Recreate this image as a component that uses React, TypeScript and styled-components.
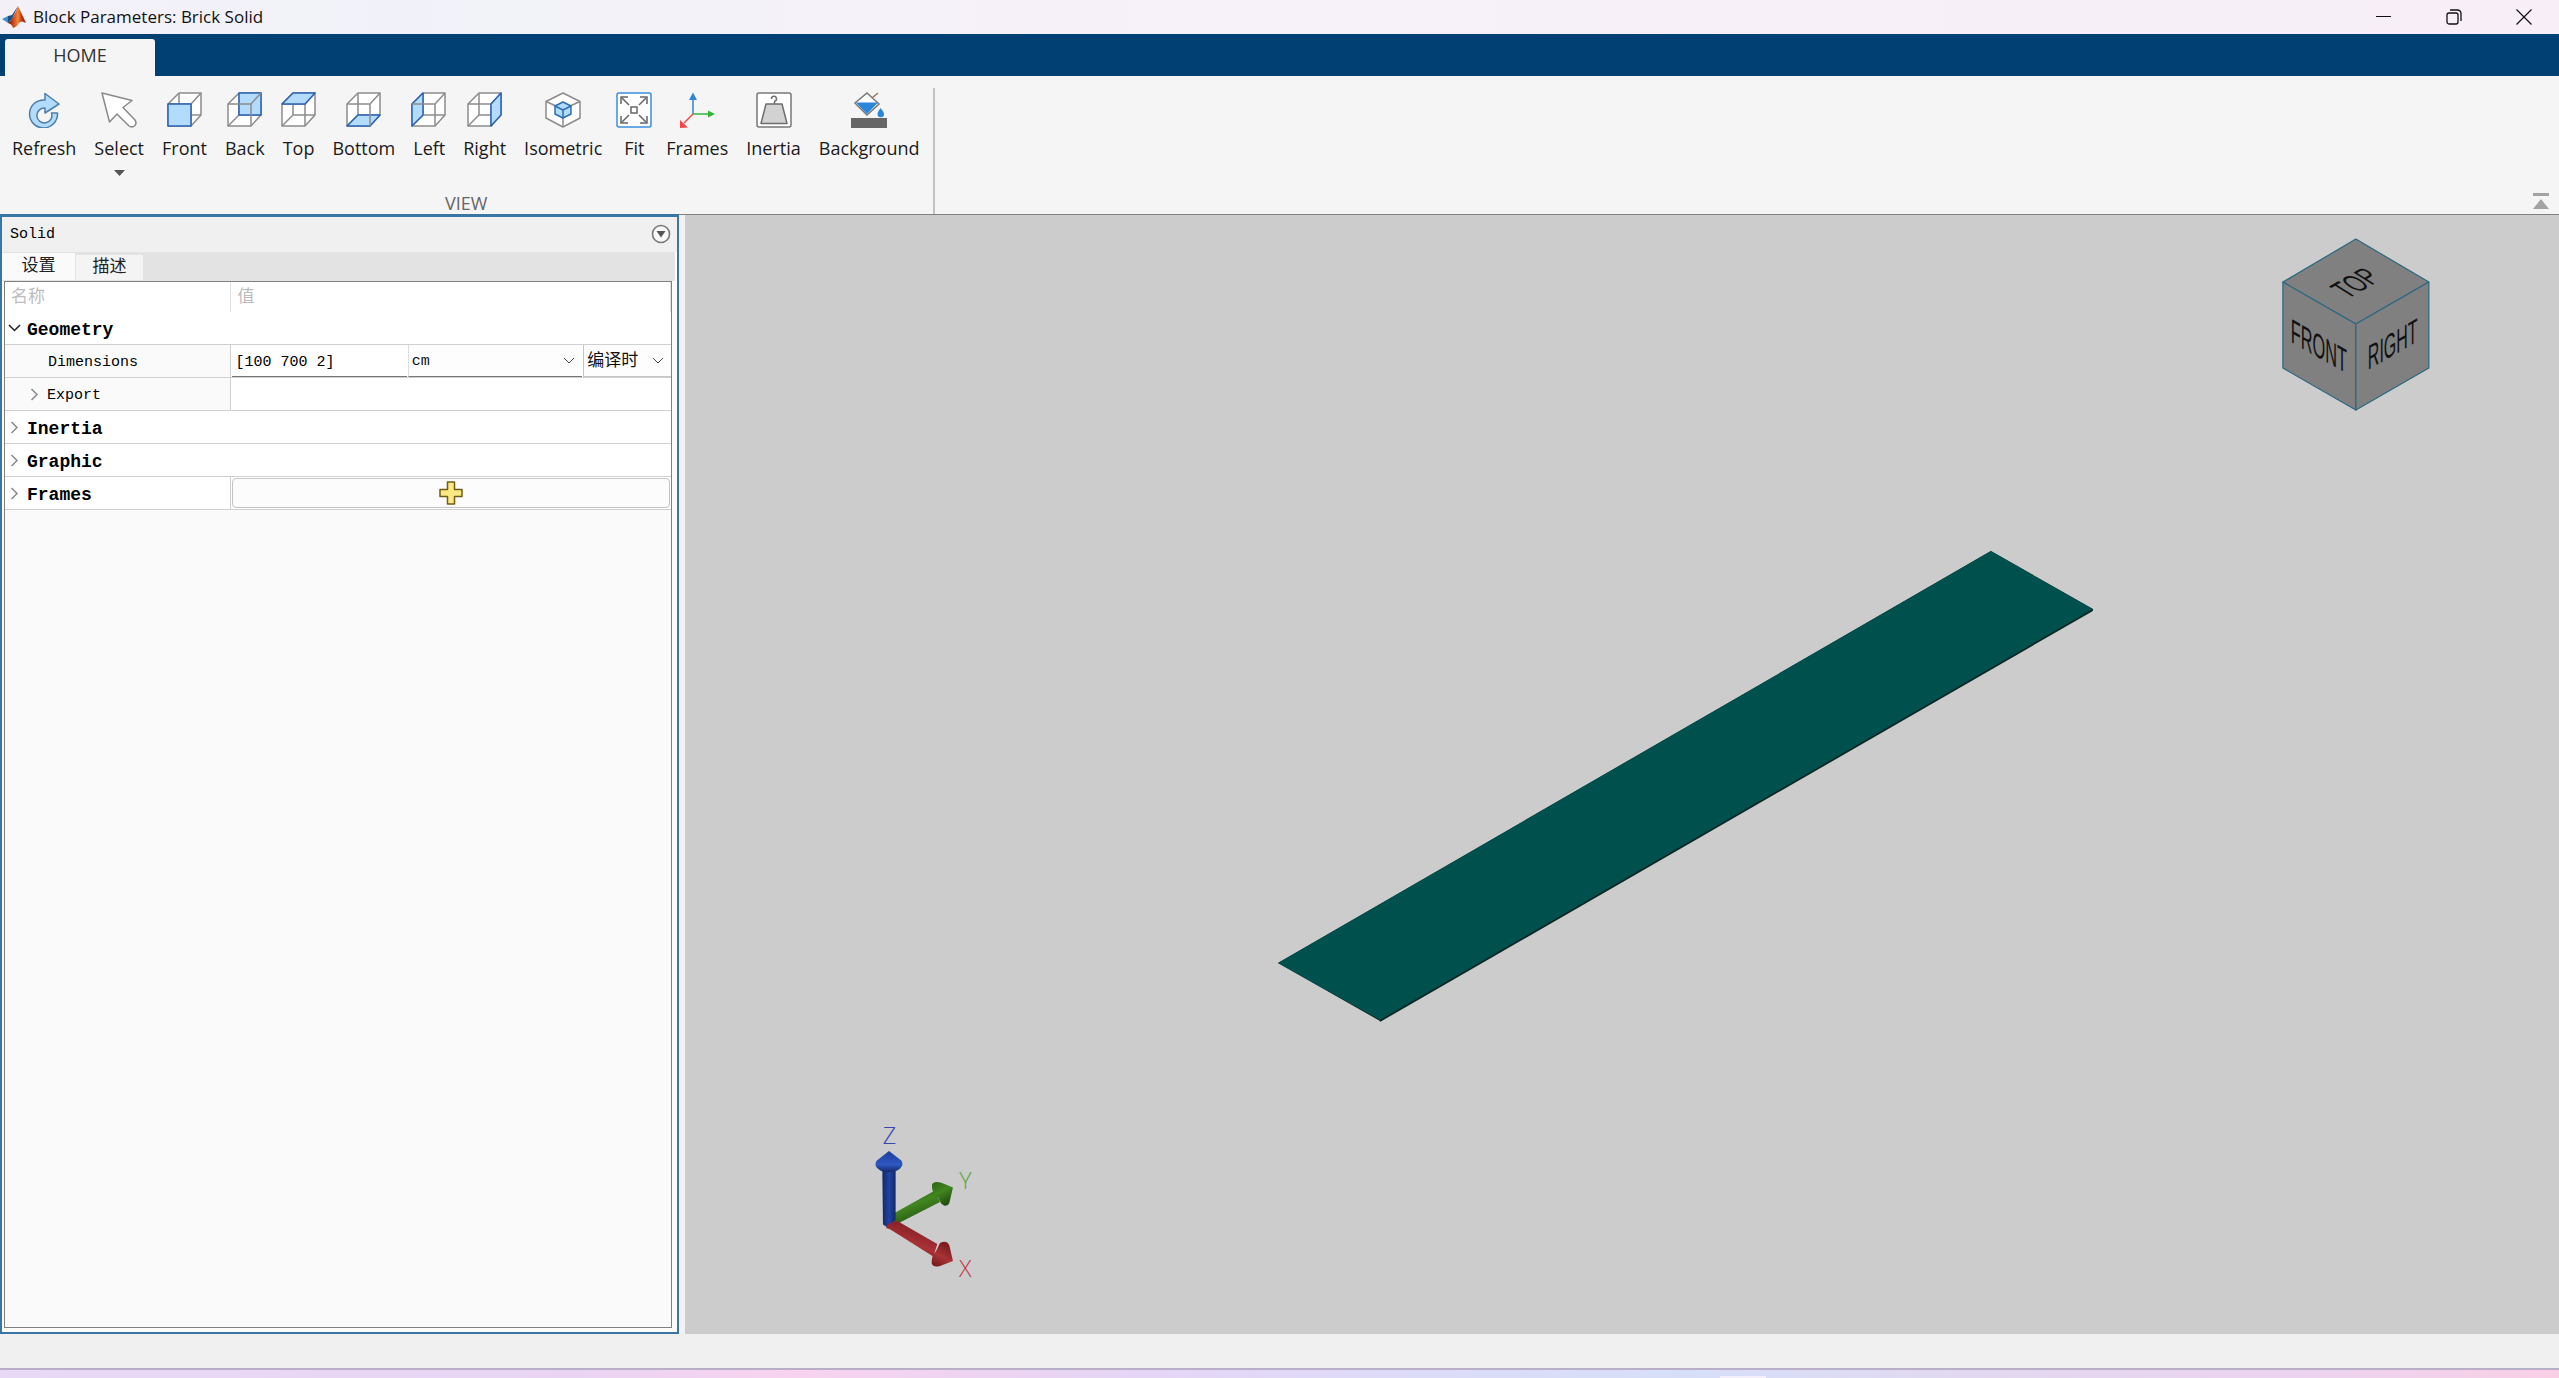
import React, { useState } from "react";
import styled, { createGlobalStyle } from "styled-components";

const UI = `"Open Sans", "Noto Sans", "Noto Sans CJK SC", sans-serif`;
const MONO = `"Liberation Mono", "Noto Sans CJK SC", monospace`;

const GlobalStyle = createGlobalStyle`
  * { box-sizing: border-box; }
  body { margin: 0; background: #f0f0f0; }
  button, input, select { font: inherit; color: inherit; }
`;

const Window = styled.div`
  display: flex;
  flex-direction: column;
  height: 100vh;
  min-height: 640px;
  font-family: ${UI};
  font-size: 18px;
  color: #1a1a1a;
`;

/* ---------- title bar ---------- */

const TitleBar = styled.header`
  display: flex;
  align-items: center;
  height: 34px;
  padding-left: 2px;
  background: linear-gradient(90deg, #f3f0f8 0%, #f1f2f9 16%, #f6f1f8 40%, #f7eef8 100%);
`;

const Title = styled.h1`
  flex: 1;
  margin: 0 0 0 6px;
  font-size: 17px;
  line-height: 24px;
  font-weight: 400;
  color: #111;
`;

const WindowButtons = styled.div`
  display: flex;
`;

const WindowButton = styled.button`
  display: grid;
  place-items: center;
  width: 70px;
  height: 34px;
  padding: 0;
  border: 0;
  background: none;
`;

/* ---------- tool strip ---------- */

const TabStrip = styled.nav`
  display: flex;
  flex-shrink: 0;
  align-items: flex-end;
  height: 42px;
  padding-left: 5px;
  background: #004073;
`;

const StripTab = styled.button`
  width: 150px;
  height: 37px;
  padding: 0 0 6px;
  border: 0;
  border-radius: 3px 3px 0 0;
  background: #f5f5f5;
  color: #333;
`;

const ToolStrip = styled.div`
  display: flex;
  flex-shrink: 0;
  justify-content: space-between;
  height: 139px;
  border-bottom: 1px solid #808080;
  background: #f5f5f5;
`;

const ToolGroup = styled.section`
  display: flex;
  flex-direction: column;
  justify-content: space-between;
  margin-top: 12px;
  border-right: 2px solid #c2c2c2;
`;

const ToolRow = styled.div`
  display: flex;
  align-items: flex-start;
  padding: 4px 4px 0 3px;
`;

const ToolButton = styled.button`
  display: flex;
  flex-direction: column;
  align-items: center;
  min-width: 46px;
  padding: 0 9px;
  border: 0;
  background: none;
  line-height: 24px;
`;

/* Icons may reach into the button's side padding, so short labels keep narrow buttons. */
const ToolIcon = styled.span`
  display: grid;
  margin: 0 -6px;
`;

const ToolLabel = styled.span`
  margin: 8px 0 10px;
`;

const GroupTitle = styled.h2`
  margin: 0;
  font-size: 18px;
  line-height: 22px;
  font-weight: 400;
  text-align: center;
  color: #666;
`;

const CollapseButton = styled.button`
  align-self: flex-end;
  display: grid;
  margin-right: 10px;
  padding: 0 0 5px;
  border: 0;
  background: none;
`;

/* ---------- work area ---------- */

const Workspace = styled.main`
  display: flex;
  flex: 1;
  min-height: 0;
  gap: 6px;
  background: #f4f1f1;
`;

const Dock = styled.aside`
  display: flex;
  flex-direction: column;
  flex: 0 0 auto;
  width: max(560px, 26.54%);
  margin-top: -1px;
  border: 2px solid #3a76a4;
  border-top-width: 3px;
  background: #fdfbfb;
  font-family: ${MONO};
  font-size: 15px;
  line-height: 24px;
  color: #000;
`;

const DockHeader = styled.div`
  display: flex;
  align-items: center;
  justify-content: space-between;
  height: 35px;
  padding: 0 6px 2px 8px;
  background: #f0f0f0;
`;

const DockTitle = styled.h2`
  margin: 0;
  padding-top: 3px;
  font-size: 15px;
  font-weight: 400;
`;

const IconButton = styled.button`
  display: grid;
  padding: 0;
  border: 0;
  background: none;
`;

const DockTabs = styled.div`
  display: flex;
  align-items: flex-end;
  gap: 1px;
  height: 29px;
  margin-right: 2px;
  padding-bottom: 1px;
  background: #e3e3e3;
`;

const DockTab = styled.button<{ $active: boolean }>`
  width: ${(p) => (p.$active ? 73 : 67)}px;
  height: ${(p) => (p.$active ? 27 : 25)}px;
  padding: 1px 0 0;
  border: 0;
  background: ${(p) => (p.$active ? "#fafafa" : "#f4f4f4")};
  font-size: 17px;
  line-height: 24px;
  color: #222;
`;

const DockBody = styled.div`
  flex: 1;
  margin: 0 5px 4px 2px;
  border: 1px solid #808080;
  background: #fafafa;
`;

const PropertyTable = styled.table`
  width: 100%;
  table-layout: fixed;
  border-collapse: separate;
  border-spacing: 0;
`;

const NameColumn = styled.col`
  width: 34%;
`;

const HeadCell = styled.th`
  height: 30px;
  padding: 2px 6px 0;
  border-right: 1px solid #e2e2e2;
  background: #fff;
  font-size: 17px;
  line-height: 24px;
  font-weight: 400;
  text-align: left;
  color: #bcbcbc;
`;

const Cell = styled.td<{ $divided?: boolean; $shaded?: boolean }>`
  height: 33px;
  padding: 0;
  border-right: ${(p) => (p.$divided ? "1px solid #d0d0d0" : "0")};
  border-bottom: 1px solid #d0d0d0;
  background: ${(p) => (p.$shaded ? "#fafafa" : "#fff")};
`;

const Node = styled.div<{ $bold?: boolean; $depth: number }>`
  display: flex;
  align-items: center;
  gap: 6px;
  height: 32px;
  padding-left: ${(p) => 3 + p.$depth * 20}px;
  font-size: ${(p) => (p.$bold ? 18 : 15)}px;
  font-weight: ${(p) => (p.$bold ? 700 : 400)};
`;

const NodeName = styled.span`
  padding-top: 3px;
`;

const Editors = styled.div`
  display: grid;
  grid-template-columns: 1fr 1fr 88px;
  gap: 1px;
  height: 32px;
  padding-left: 1px;
`;

const TextBox = styled.input`
  min-width: 0;
  height: 32px;
  padding: 3px 3px 0;
  border: 0;
  border-bottom: 1px solid #777;
  border-radius: 0;
  background: #fff;
`;

const Picker = styled.label<{ $soft?: boolean }>`
  display: grid;
  align-items: center;
  height: 32px;
  border-left: 1px solid ${(p) => (p.$soft ? "#c4c4c4" : "#dedede")};
  border-bottom: 1px solid ${(p) => (p.$soft ? "#c4c4c4" : "#777")};
  background: #fdfdfd;

  select {
    grid-area: 1 / 1;
    height: 31px;
    padding: 3px 3px 0;
    border: 0;
    appearance: none;
    background: none;
    font-size: ${(p) => (p.$soft ? 17 : 15)}px;
    color: #111;
  }

  svg {
    grid-area: 1 / 1;
    justify-self: end;
    margin-right: 7px;
    pointer-events: none;
  }
`;

const AddButton = styled.button`
  display: grid;
  place-items: center;
  width: calc(100% - 2px);
  height: 30px;
  margin: 0 1px;
  padding: 0;
  border: 1px solid #c4c4c4;
  border-radius: 4px;
  background: #fcfcfc;
`;

const Viewport = styled.section`
  display: flex;
  flex: 1;
  min-width: 0;
  background: #cccccc;
`;

const Scene = styled.svg`
  display: block;
  width: 100%;
  height: 100%;
`;

const StatusBar = styled.footer`
  flex-shrink: 0;
  height: 34px;
  background: #f0f0f0;
`;

const Taskbar = styled.div`
  display: flex;
  flex-shrink: 0;
  align-items: flex-end;
  height: 10px;
  padding-left: 67.2%;
  border-top: 2px solid #b9aec8;
  background: linear-gradient(90deg, #e8d9f6 0%, #e9d4f4 22%, #f8d3ef 31%, #e8d4f4 42%, #dcdcf8 56%, #d7dff8 66%, #e3d7f0 78%, #ecd3ef 90%, #f9cfe6 100%);
`;

const TaskbarItem = styled.span`
  width: 46px;
  height: 2px;
  background: #f3f0fb;
`;

/* ---------- icons ---------- */

const GREY = "#8c8c8c";
const BLUE = "#2b62b4";
const SKY = "#b3dbfb";

type Face = "front" | "back" | "top" | "bottom" | "left" | "right";

const FACES: Record<Face, string> = {
  front: "1,12 24,12 24,34 1,34",
  back: "12,1 34,1 34,23 12,23",
  top: "1,12 12,1 34,1 24,12",
  bottom: "1,34 12,23 34,23 24,34",
  left: "1,12 12,1 12,23 1,34",
  right: "24,12 34,1 34,23 24,34",
};

function CubeIcon({ face }: { face: Face }) {
  const behind = face === "back" || face === "bottom" || face === "left";
  const marked = <polygon points={FACES[face]} fill={SKY} stroke={BLUE} />;
  return (
    <svg width="36" height="36" viewBox="0 0 36 36" fill="none" stroke={GREY} strokeWidth="1.5" strokeLinejoin="round">
      <polygon points="1,12 12,1 34,1 34,23 24,34 1,34" fill="#fff" />
      <path d="M12 1v22h22M12 23L1 34" />
      {behind && marked}
      <path d="M1 12h23v22M24 12L34 1" />
      {!behind && marked}
    </svg>
  );
}

const RefreshIcon = () => (
  <svg width="36" height="36" viewBox="0 0 36 36">
    <path d="M19 8V1.500L33 12 19 21V16A7.500 7.500 0 1 0 25.500 21H31.500A14 14 0 1 1 19 8Z" fill="#b3dbfb" stroke="#4a7fae" strokeWidth="1.500" strokeLinejoin="round" />
  </svg>
);

const SelectIcon = () => (
  <svg width="36" height="36" viewBox="0 0 36 36">
    <path d="M1 1L31 8.500 22 15.500 34 28Q36 31 34 33.500 31 36 28 34L16 22 8.500 30Z" fill="#fff" stroke="#8a8a8a" strokeWidth="1.500" strokeLinejoin="round" />
  </svg>
);

const IsometricIcon = () => (
  <svg width="36" height="36" viewBox="0 0 36 36" fill="none" strokeLinejoin="round">
    <path d="M18 1L35 9.500V26L18 35 1 26V9.500Z" fill="#fff" stroke={GREY} strokeWidth="1.500" />
    <path d="M1 9.500L11 14M35 9.500L25 14M18 25v10" stroke={GREY} strokeWidth="1.500" />
    <path d="M18 10l8 4v8l-8 4-8-4v-8Z" fill={SKY} stroke="#2c6db5" strokeWidth="1.500" />
    <path d="M10 14l8 4 8-4M18 18v8" stroke="#2c6db5" strokeWidth="1.500" />
  </svg>
);

const FitIcon = () => (
  <svg width="36" height="36" viewBox="0 0 36 36" fill="none" stroke="#666" strokeWidth="1.500">
    <rect x="1" y="1" width="34" height="34" rx="2" fill="#fff" stroke="#3b8ede" />
    <rect x="15" y="15" width="6" height="6" />
    <path d="M13 13L6 6M23 13L30 6M13 23L6 30M23 23L30 30" />
    <path d="M5 12V5h7M24 5h7v7M31 24v7h-7M12 31H5v-7" />
  </svg>
);

const FramesIcon = () => (
  <svg width="36" height="36" viewBox="0 0 36 36" fill="none" strokeWidth="1.500">
    <path d="M14 22V5" stroke="#2f86d6" />
    <path d="M14 0.500l4 7.500h-8Z" fill="#2f86d6" />
    <path d="M14 22h16" stroke="#35b53a" />
    <path d="M36 22l-7 3.500v-7Z" fill="#35b53a" />
    <path d="M14 22L5 31" stroke="#f04848" />
    <path d="M1 36V28l8 7.500Z" fill="#f04848" />
  </svg>
);

const InertiaIcon = () => (
  <svg width="36" height="36" viewBox="0 0 36 36" strokeLinejoin="round">
    <rect x="1" y="1" width="34" height="34" rx="2" fill="#fff" stroke="#777" strokeWidth="1.500" />
    <path d="M10 12h16l5 19.500H5Z" fill="#d2d2d2" stroke="#6e6e6e" strokeWidth="1.500" />
    <path d="M15.500 7a2.500 2.500 0 1 1 3.500 2l-1 3" fill="none" stroke="#6e6e6e" strokeWidth="1.500" />
  </svg>
);

const BackgroundIcon = () => (
  <svg width="38" height="36" viewBox="0 0 38 36">
    <path d="M17 1L29 12 17 23 5 11Z" fill="#fff" stroke="#777" strokeWidth="1.500" />
    <path d="M6 10.500h22L17 22Z" fill="#2a86db" />
    <path d="M22 6l6-5" stroke="#a0705c" strokeWidth="1.500" />
    <path d="M30.500 16q3.500 4 3.500 6a3 3 0 0 1-6.500 0q0-2 3-6Z" fill="#2a86db" />
    <rect x="1" y="26" width="36" height="10" fill="#666" />
  </svg>
);

const CaretDown = () => (
  <svg width="11" height="6" viewBox="0 0 11 6"><path d="M0 0h11L5.500 6Z" fill="#555" /></svg>
);

const Chevron = ({ open, color }: { open?: boolean; color: string }) => (
  <svg width="13" height="13" viewBox="0 0 13 13" fill="none" stroke={color} strokeWidth="1.500">
    <path d={open ? "M1 3l5.500 5.500L12 3" : "M3.500 1l5.500 5.500L3.500 12"} />
  </svg>
);

const PickerArrow = () => (
  <svg width="12" height="8" viewBox="0 0 12 8" fill="none" stroke="#444"><path d="M1 1l5 5 5-5" /></svg>
);

const PlusIcon = () => (
  <svg width="24" height="24" viewBox="0 0 24 24">
    <path d="M8.500 1h7v7.500H23v7h-7.500V23h-7v-7.500H1v-7h7.500Z" fill="#fde983" stroke="#6f5d14" strokeWidth="1.500" strokeLinejoin="round" />
  </svg>
);

const MatlabIcon = () => (
  <svg width="25" height="24" viewBox="0 0 25 24">
    <defs>
      <linearGradient id="peak" x1="0" x2="1">
        <stop offset="0" stopColor="#5c1a18" />
        <stop offset="0.350" stopColor="#d8521f" />
        <stop offset="0.550" stopColor="#f08a38" />
        <stop offset="0.750" stopColor="#c33a14" />
        <stop offset="1" stopColor="#8e1a0c" />
      </linearGradient>
    </defs>
    <path d="M0 14l6-3 4 3-4 4Z" fill="#3f8fce" />
    <path d="M6 11l4-1 6-9-6 13-4 4Z" fill="#1f4f7e" />
    <path d="M16 1q3 6 8 17-5-3-7 0-2 4-6 5-1-4-5-5 5-3 10-17Z" fill="url(#peak)" />
  </svg>
);

/* ---------- 3-D scene ---------- */

const Brick = () => (
  <g>
    <polygon points="593,748 695,806 695,807 1408,396 1408,394 1306,336" fill="#0a2624" />
    <polygon points="593,748 1306,336 1408,394 695,805" fill="#00504e" />
  </g>
);

const ViewCube = () => (
  <g stroke="#2b6780" strokeWidth="1.200" strokeLinejoin="round" fill="#808080">
    <polygon points="1671,24 1744,67 1671,109 1598,67" />
    <polygon points="1598,67 1671,109 1671,195 1598,153" />
    <polygon points="1744,67 1671,109 1671,195 1744,153" />
    <g fill="#111" stroke="none" fontFamily="'Liberation Sans', Arial, sans-serif" fontSize="34">
      <text transform="matrix(0.480 0.270 0 1 1606 127)">FRONT</text>
      <text transform="matrix(0.470 -0.270 0 1 1683 155)">RIGHT</text>
      <text transform="matrix(0.500 -0.290 0.820 0.520 1663 84)">TOP</text>
    </g>
  </g>
);

const Triad = () => (
  <g transform="translate(155 895) scale(0.3333)">
    <defs>
      <linearGradient id="zShaft" x1="0" x2="1">
        <stop offset="0" stopColor="#132a63" />
        <stop offset="0.500" stopColor="#1f42a4" />
        <stop offset="1" stopColor="#12296a" />
      </linearGradient>
      <linearGradient id="zHead" x1="0" x2="0" y1="0" y2="1">
        <stop offset="0" stopColor="#1c3c9a" />
        <stop offset="0.650" stopColor="#2f58c2" />
        <stop offset="1" stopColor="#14296a" />
      </linearGradient>
      <linearGradient id="yShaft" x1="0" x2="0.500" y1="0" y2="1">
        <stop offset="0" stopColor="#2c6412" />
        <stop offset="0.500" stopColor="#418520" />
        <stop offset="1" stopColor="#23500e" />
      </linearGradient>
      <linearGradient id="xShaft" x1="0.500" x2="0" y1="0" y2="1">
        <stop offset="0" stopColor="#7a1c20" />
        <stop offset="0.500" stopColor="#a93236" />
        <stop offset="1" stopColor="#6a1719" />
      </linearGradient>
    </defs>
    <path d="M158 312L285 242 300 276 165 345Z" fill="url(#yShaft)" />
    <path d="M276 224Q281 212 306 219L339 233 328 279Q324 290 312 287 300 280 296 264 274 250 276 224Z" fill="url(#yShaft)" />
    <path d="M127 180h40v150l-22 24-16-10Z" fill="url(#zShaft)" />
    <path d="M147 123L185 152Q194 170 170 182 147 190 122 182 98 168 110 152Z" fill="url(#zHead)" />
    <path d="M138 354Q142 336 172 333L292 402 280 440 150 358Z" fill="url(#xShaft)" />
    <path d="M300 399Q320 390 328 406L339 453 300 468Q280 474 275 460 274 436 288 424Z" fill="url(#xShaft)" />
    <g fontFamily="'Open Sans', sans-serif" fontWeight="300" fontSize="70">
      <text x="128" y="103" fill="#3248b0">Z</text>
      <text x="358" y="238" fill="#5aa63a">Y</text>
      <text x="357" y="501" fill="#c23848">X</text>
    </g>
  </g>
);

/* ---------- page ---------- */

const TOOLS = [
  { label: "Refresh", icon: <RefreshIcon /> },
  { label: "Select", icon: <SelectIcon />, menu: true },
  { label: "Front", icon: <CubeIcon face="front" /> },
  { label: "Back", icon: <CubeIcon face="back" /> },
  { label: "Top", icon: <CubeIcon face="top" /> },
  { label: "Bottom", icon: <CubeIcon face="bottom" /> },
  { label: "Left", icon: <CubeIcon face="left" /> },
  { label: "Right", icon: <CubeIcon face="right" /> },
  { label: "Isometric", icon: <IsometricIcon /> },
  { label: "Fit", icon: <FitIcon /> },
  { label: "Frames", icon: <FramesIcon /> },
  { label: "Inertia", icon: <InertiaIcon /> },
  { label: "Background", icon: <BackgroundIcon /> },
];

const DOCK_TABS = ["设置", "描述"];

function GroupNode({ name, open }: { name: string; open?: boolean }) {
  return (
    <Node $bold $depth={0}>
      <Chevron open={open} color={open ? "#222" : "#8a8a8a"} />
      <NodeName>{name}</NodeName>
    </Node>
  );
}

export default function App() {
  const [tab, setTab] = useState(0);
  const [dimensions, setDimensions] = useState("[100 700 2]");

  return (
    <Window>
      <GlobalStyle />
      <TitleBar>
        <MatlabIcon />
        <Title>Block Parameters: Brick Solid</Title>
        <WindowButtons>
          <WindowButton aria-label="Minimize">
            <svg width="16" height="16" viewBox="0 0 16 16" stroke="#111"><path d="M0 7.500h15" /></svg>
          </WindowButton>
          <WindowButton aria-label="Restore">
            <svg width="16" height="16" viewBox="0 0 16 16" fill="none" stroke="#111" strokeWidth="1.300">
              <rect x="1" y="4" width="11" height="11" rx="2" />
              <path d="M4 1h7.500a3.500 3.500 0 0 1 3.500 3.500V12" />
            </svg>
          </WindowButton>
          <WindowButton aria-label="Close">
            <svg width="16" height="16" viewBox="0 0 16 16" stroke="#111" strokeWidth="1.200"><path d="M0.500 0.500l15 15M15.500 0.500l-15 15" /></svg>
          </WindowButton>
        </WindowButtons>
      </TitleBar>

      <TabStrip>
        <StripTab>HOME</StripTab>
      </TabStrip>

      <ToolStrip>
        <ToolGroup>
          <ToolRow>
            {TOOLS.map((tool) => (
              <ToolButton key={tool.label}>
                <ToolIcon>{tool.icon}</ToolIcon>
                <ToolLabel>{tool.label}</ToolLabel>
                {tool.menu && <CaretDown />}
              </ToolButton>
            ))}
          </ToolRow>
          <GroupTitle>VIEW</GroupTitle>
        </ToolGroup>
        <CollapseButton aria-label="Collapse">
          <svg width="16" height="16" viewBox="0 0 16 16" fill="#a3a3a3"><path d="M0 0h16v3H0ZM8 6l8 10H0Z" /></svg>
        </CollapseButton>
      </ToolStrip>

      <Workspace>
        <Dock>
          <DockHeader>
            <DockTitle>Solid</DockTitle>
            <IconButton aria-label="Actions">
              <svg width="20" height="20" viewBox="0 0 20 20">
                <circle cx="10" cy="10" r="8.500" fill="#f8f8f8" stroke="#777" strokeWidth="1.600" />
                <path d="M5.500 7h9L10 13.500Z" fill="#555" />
              </svg>
            </IconButton>
          </DockHeader>
          <DockTabs role="tablist">
            {DOCK_TABS.map((name, i) => (
              <DockTab key={name} role="tab" aria-selected={tab === i} $active={tab === i} onClick={() => setTab(i)}>
                {name}
              </DockTab>
            ))}
          </DockTabs>
          <DockBody>
            <PropertyTable>
              <colgroup>
                <NameColumn />
                <col />
              </colgroup>
              <thead>
                <tr>
                  <HeadCell>名称</HeadCell>
                  <HeadCell>值</HeadCell>
                </tr>
              </thead>
              <tbody>
                <tr>
                  <Cell colSpan={2}><GroupNode name="Geometry" open /></Cell>
                </tr>
                <tr>
                  <Cell $divided $shaded>
                    <Node as="label" htmlFor="dimensions" $depth={2}><NodeName>Dimensions</NodeName></Node>
                  </Cell>
                  <Cell>
                    <Editors>
                      <TextBox id="dimensions" value={dimensions} onChange={(e) => setDimensions(e.target.value)} />
                      <Picker>
                        <select aria-label="Unit" defaultValue="cm">
                          <option>cm</option>
                        </select>
                        <PickerArrow />
                      </Picker>
                      <Picker $soft>
                        <select aria-label="Evaluation">
                          <option>编译时</option>
                        </select>
                        <PickerArrow />
                      </Picker>
                    </Editors>
                  </Cell>
                </tr>
                <tr>
                  <Cell $divided $shaded>
                    <Node $depth={1}><Chevron color="#8a8a8a" /><NodeName>Export</NodeName></Node>
                  </Cell>
                  <Cell />
                </tr>
                <tr>
                  <Cell colSpan={2}><GroupNode name="Inertia" /></Cell>
                </tr>
                <tr>
                  <Cell colSpan={2}><GroupNode name="Graphic" /></Cell>
                </tr>
                <tr>
                  <Cell $divided><GroupNode name="Frames" /></Cell>
                  <Cell><AddButton aria-label="Add frame"><PlusIcon /></AddButton></Cell>
                </tr>
              </tbody>
            </PropertyTable>
          </DockBody>
        </Dock>

        <Viewport>
          <Scene viewBox="0 0 1874 1119" preserveAspectRatio="xMidYMid meet" role="img" aria-label="Brick solid">
            <Brick />
            <ViewCube />
            <Triad />
          </Scene>
        </Viewport>
      </Workspace>

      <StatusBar />
      <Taskbar>
        <TaskbarItem />
      </Taskbar>
    </Window>
  );
}
